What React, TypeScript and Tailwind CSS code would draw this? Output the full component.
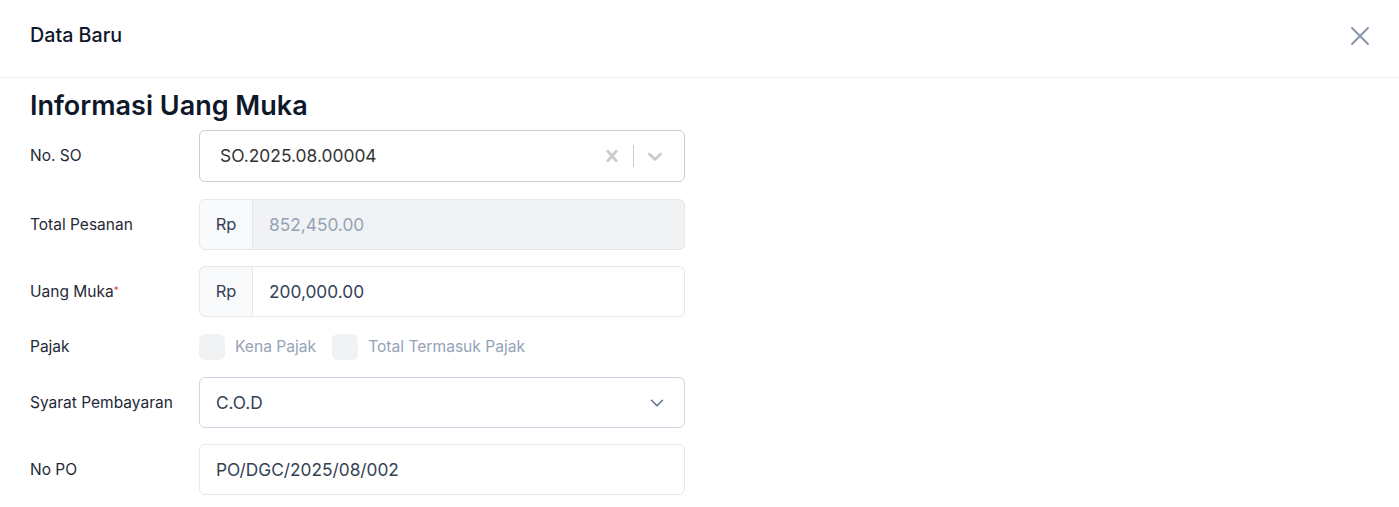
import React from "react";

function CrossIcon() {
  return (
    <svg width="24" height="24" viewBox="0 0 20 20" fill="currentColor" aria-hidden="true">
      <path d="M14.348 14.849c-0.469 0.469-1.229 0.469-1.697 0l-2.651-3.030-2.651 3.029c-0.469 0.469-1.229 0.469-1.697 0-0.469-0.469-0.469-1.229 0-1.697l2.758-3.15-2.759-3.152c-0.469-0.469-0.469-1.228 0-1.697s1.228-0.469 1.697 0l2.652 3.031 2.651-3.031c0.469-0.469 1.228-0.469 1.697 0s0.469 1.229 0 1.697l-2.758 3.152 2.758 3.15c0.469 0.469 0.469 1.229 0 1.698z" />
    </svg>
  );
}

function DownChevron() {
  return (
    <svg width="24" height="24" viewBox="0 0 20 20" fill="currentColor" aria-hidden="true">
      <path d="M4.516 7.548c0.436-0.446 1.043-0.481 1.576 0l3.908 3.747 3.908-3.747c0.533-0.481 1.141-0.446 1.574 0 0.436 0.445 0.408 1.197 0 1.615-0.406 0.418-4.695 4.502-4.695 4.502-0.217 0.223-0.502 0.335-0.787 0.335s-0.57-0.112-0.789-0.335c0 0-4.287-4.084-4.695-4.502s-0.436-1.17 0-1.615z" />
    </svg>
  );
}

function Label({ children }: { children: React.ReactNode }) {
  return (
    <div className="w-[169px] shrink-0 text-[15.5px] text-[#1f2937]">{children}</div>
  );
}

export default function App() {
  return (
    <div
      className="w-[1399px] h-[507px] bg-white overflow-hidden"
      style={{ fontFamily: "Inter, 'Noto Sans', sans-serif" }}
    >
      {/* Header */}
      <div className="h-[78px] border-b border-[#eef0f3] flex items-center justify-between pl-[30px] pr-[31px]">
        <div className="text-[19.7px] font-medium text-[#0f172a] leading-7 -mt-[8px]">Data Baru</div>
        <svg
          width="32"
          height="32"
          viewBox="0 0 24 24"
          fill="none"
          stroke="#8a93a8"
          strokeWidth="1.5"
          strokeLinecap="round"
          strokeLinejoin="round"
          className="-mr-2 -mt-[6px]"
        >
          <path d="M18 6 6 18" />
          <path d="m6 6 12 12" />
        </svg>
      </div>

      {/* Body */}
      <div className="px-[30px] pt-[12px]">
        <h2 className="text-[27px] leading-8 font-semibold text-[#0f172a] mb-[8px]">
          Informasi Uang Muka
        </h2>

        {/* No. SO */}
        <div className="flex items-center mb-[17px]">
          <Label>No. SO</Label>
          <div className="w-[486px] h-[52px] border border-[#cccccc] rounded-[6px] flex items-center pl-[20px] pr-[17px]">
            <div className="flex-1 text-[17.4px] text-[#333333]">SO.2025.08.00004</div>
            <div className="flex items-center text-[#cccccc]">
              <CrossIcon />
              <div className="w-px h-[22px] bg-[#cccccc] mx-[9px]" />
              <DownChevron />
            </div>
          </div>
        </div>

        {/* Total Pesanan */}
        <div className="flex items-center mb-[16px]">
          <Label>Total Pesanan</Label>
          <div className="w-[486px] h-[51px] flex">
            <div className="w-[54px] shrink-0 border border-[#e5e7eb] bg-[#f9fafb] rounded-l-[6px] flex items-center justify-center text-[16.5px] text-[#334155]">
              Rp
            </div>
            <div className="flex-1 border border-l-0 border-[#e5e7eb] bg-[#f1f2f4] rounded-r-[6px] flex items-center pl-[16px] text-[17.3px] text-[#94a3b8]">
              852,450.00
            </div>
          </div>
        </div>

        {/* Uang Muka */}
        <div className="flex items-center mb-[17px]">
          <Label>
            Uang Muka<sup className="text-[#ef4444] text-[10px] relative -top-[3px]">*</sup>
          </Label>
          <div className="w-[486px] h-[51px] flex">
            <div className="w-[54px] shrink-0 border border-[#e5e7eb] bg-[#f9fafb] rounded-l-[6px] flex items-center justify-center text-[16.5px] text-[#334155]">
              Rp
            </div>
            <div className="flex-1 border border-l-0 border-[#e5e7eb] bg-white rounded-r-[6px] flex items-center pl-[16px] text-[17.3px] text-[#334155]">
              200,000.00
            </div>
          </div>
        </div>

        {/* Pajak */}
        <div className="flex items-center mb-[17px]">
          <Label>Pajak</Label>
          <div className="flex items-center">
            <div className="w-[26px] h-[26px] rounded-[6px] bg-[#f1f2f4]" />
            <span className="ml-[10px] text-[15.6px] text-[#94a3b8]">Kena Pajak</span>
            <div className="w-[26px] h-[26px] rounded-[6px] bg-[#f1f2f4] ml-[16px]" />
            <span className="ml-[10px] text-[15.6px] text-[#94a3b8]">Total Termasuk Pajak</span>
          </div>
        </div>

        {/* Syarat Pembayaran */}
        <div className="flex items-center mb-[16px]">
          <Label>Syarat Pembayaran</Label>
          <div className="w-[486px] h-[51px] border border-[#cbd5e1] rounded-[6px] flex items-center pl-[16px] pr-[16px]">
            <div className="flex-1 text-[17.3px] text-[#334155]">C.O.D</div>
            <svg
              width="22"
              height="22"
              viewBox="0 0 24 24"
              fill="none"
              stroke="#64748b"
              strokeWidth="1.75"
              strokeLinecap="round"
              strokeLinejoin="round"
            >
              <path d="m6 9 6 6 6-6" />
            </svg>
          </div>
        </div>

        {/* No PO */}
        <div className="flex items-center">
          <Label>No PO</Label>
          <div className="w-[486px] h-[51px] border border-[#e2e8f0] rounded-[6px] flex items-center pl-[16px] text-[17.3px] text-[#334155]">
            PO/DGC/2025/08/002
          </div>
        </div>
      </div>
    </div>
  );
}
